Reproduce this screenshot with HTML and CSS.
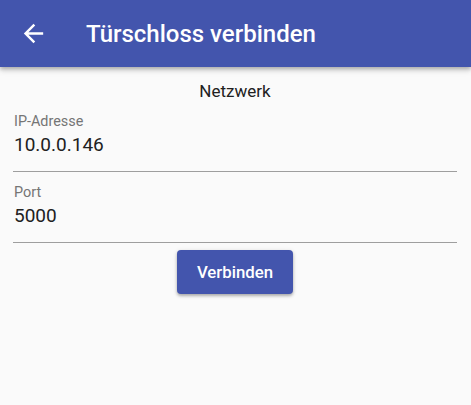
FILE: index.html
```html
<!DOCTYPE html>
<html lang="de">
<head>
<meta charset="utf-8">
<link rel="stylesheet" href="styles.css">
</head>
<body>
<header class="appbar">
  <svg class="back" viewBox="0 0 24 24" width="29" height="29"><path fill="#fff" d="M20 11H7.83l5.59-5.59L12 4l-8 8 8 8 1.41-1.41L7.83 13H20v-2z"/></svg>
  <h1 class="title">Türschloss verbinden</h1>
</header>
<main class="content">
  <div class="section">Netzwerk</div>
  <label class="field">
    <span class="label">IP-Adresse</span>
    <span class="value">10.0.0.146</span>
  </label>
  <label class="field">
    <span class="label">Port</span>
    <span class="value">5000</span>
  </label>
  <div class="actions">
    <button class="btn">Verbinden</button>
  </div>
</main>
</body>
</html>
```
FILE: styles.css
```css
html, body {
  margin: 0;
  padding: 0;
  background: #fafafa;
  font-family: Roboto, "Noto Sans", sans-serif;
  width: 471px;
  height: 405px;
  overflow: hidden;
}
.appbar {
  height: 67px;
  background: #4355ad;
  display: flex;
  align-items: center;
  padding-left: 19px;
  box-shadow: 0 2px 4px rgba(0,0,0,0.25), 0 4px 6px rgba(0,0,0,0.1);
  position: relative;
  z-index: 1;
}
.back {
  display: block;
  flex: none;
}
.title {
  margin: 0 0 0 38px;
  color: #fff;
  font-size: 24px;
  font-weight: 500;
  line-height: 28px;
}
.content {
  padding: 0 14px 0 13px;
  display: flex;
  flex-direction: column;
}
.section {
  text-align: center;
  font-size: 17px;
  line-height: 20px;
  color: #212121;
  margin-top: 14px;
}
.field {
  display: flex;
  flex-direction: column;
  border-bottom: 1px solid #9e9e9e;
  padding-left: 1px;
}
.label {
  font-size: 14.4px;
  line-height: 17px;
  color: #757575;
  margin-top: 12px;
}
.value {
  font-size: 19px;
  line-height: 22px;
  color: #212121;
  margin-top: 4px;
  margin-bottom: 15px;
}
.actions {
  display: flex;
  justify-content: center;
  padding-top: 7px;
}
.btn {
  width: 116px;
  height: 44px;
  border: none;
  border-radius: 4px;
  background: #4355ad;
  color: #fff;
  font-family: Roboto, sans-serif;
  font-size: 16.8px;
  font-weight: 500;
  box-shadow: 0 2px 3px rgba(0,0,0,0.25), 0 1px 5px rgba(0,0,0,0.12);
  padding: 0;
}
```
